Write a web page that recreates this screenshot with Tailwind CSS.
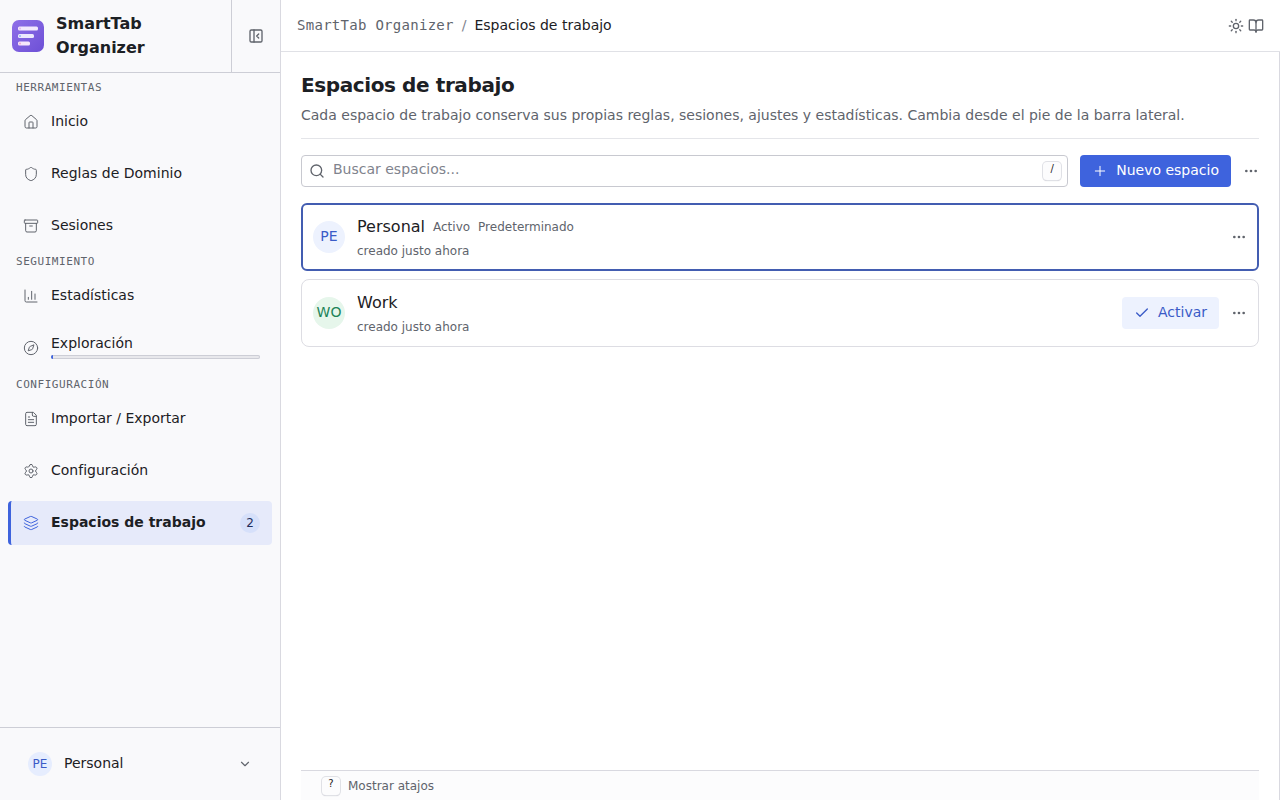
<!DOCTYPE html>
<html lang="es">
<head>
  <meta charset="UTF-8" />
  <meta name="viewport" content="width=device-width, initial-scale=1.0"/>
  <title>SmartTab Organizer - Espacios de trabajo</title>
  <script src="https://cdn.jsdelivr.net/npm/@tailwindcss/browser@4"></script>
</head>
<body class="flex h-screen overflow-hidden bg-white text-sm text-[#1c2024] font-['DejaVu_Sans',sans-serif]">

  <!-- Icons -->
  <svg class="hidden" xmlns="http://www.w3.org/2000/svg">
    <symbol id="i-dots" viewBox="0 0 24 24"><circle cx="12" cy="12" r="1"/><circle cx="19" cy="12" r="1"/><circle cx="5" cy="12" r="1"/></symbol>
    <symbol id="i-home" viewBox="0 0 24 24"><path d="M15 21v-8a1 1 0 0 0-1-1h-4a1 1 0 0 0-1 1v8"/><path d="M3 10a2 2 0 0 1 .709-1.528l7-5.999a2 2 0 0 1 2.582 0l7 5.999A2 2 0 0 1 21 10v9a2 2 0 0 1-2 2H5a2 2 0 0 1-2-2z"/></symbol>
    <symbol id="i-shield" viewBox="0 0 24 24"><path d="M20 13c0 5-3.5 7.5-7.66 8.95a1 1 0 0 1-.67-.01C7.5 20.5 4 18 4 13V6a1 1 0 0 1 1-1c2 0 4.5-1.2 6.24-2.72a1.17 1.17 0 0 1 1.52 0C14.51 3.81 17 5 19 5a1 1 0 0 1 1 1z"/></symbol>
    <symbol id="i-archive" viewBox="0 0 24 24"><rect width="20" height="5" x="2" y="3" rx="1"/><path d="M4 8v11a2 2 0 0 0 2 2h12a2 2 0 0 0 2-2V8"/><path d="M10 12h4"/></symbol>
    <symbol id="i-chart" viewBox="0 0 24 24"><path d="M3 3v16a2 2 0 0 0 2 2h16"/><path d="M18 17V9"/><path d="M13 17V5"/><path d="M8 17v-3"/></symbol>
    <symbol id="i-compass" viewBox="0 0 24 24"><path d="m16.24 7.76-1.804 5.411a2 2 0 0 1-1.265 1.265L7.76 16.24l1.804-5.411a2 2 0 0 1 1.265-1.265z"/><circle cx="12" cy="12" r="10"/></symbol>
    <symbol id="i-file" viewBox="0 0 24 24"><path d="M15 2H6a2 2 0 0 0-2 2v16a2 2 0 0 0 2 2h12a2 2 0 0 0 2-2V7Z"/><path d="M14 2v4a2 2 0 0 0 2 2h4"/><path d="M10 9H8"/><path d="M16 13H8"/><path d="M16 17H8"/></symbol>
    <symbol id="i-gear" viewBox="0 0 24 24"><path d="M9.671 4.136a2.34 2.34 0 0 1 4.659 0 2.34 2.34 0 0 0 3.319 1.915 2.34 2.34 0 0 1 2.33 4.033 2.34 2.34 0 0 0 0 3.831 2.34 2.34 0 0 1-2.33 4.033 2.34 2.34 0 0 0-3.319 1.915 2.34 2.34 0 0 1-4.659 0 2.34 2.34 0 0 0-3.32-1.915 2.34 2.34 0 0 1-2.33-4.033 2.34 2.34 0 0 0 0-3.831A2.34 2.34 0 0 1 6.35 6.051a2.34 2.34 0 0 0 3.319-1.915"/><circle cx="12" cy="12" r="3"/></symbol>
    <symbol id="i-layers" viewBox="0 0 24 24"><path d="M12.83 2.18a2 2 0 0 0-1.66 0L2.6 6.08a1 1 0 0 0 0 1.83l8.58 3.91a2 2 0 0 0 1.66 0l8.58-3.9a1 1 0 0 0 0-1.83z"/><path d="M2 12a1 1 0 0 0 .58.91l8.6 3.91a2 2 0 0 0 1.65 0l8.58-3.9A1 1 0 0 0 22 12"/><path d="M2 17a1 1 0 0 0 .58.91l8.6 3.91a2 2 0 0 0 1.65 0l8.58-3.9A1 1 0 0 0 22 17"/></symbol>
  </svg>

  <!-- Sidebar -->
  <aside class="flex w-[281px] shrink-0 flex-col border-r border-[#d9d9e0] bg-[#f9f9fb]">
    <div class="flex border-b border-[#cdced6]">
      <div class="flex flex-1 items-center gap-3 px-3 py-3">
        <svg class="size-8 shrink-0" viewBox="0 0 32 32">
          <defs>
            <linearGradient id="logo" x1="0" y1="0" x2="1" y2="1">
              <stop offset="0" stop-color="#8f6fe8"/>
              <stop offset="1" stop-color="#6d50d6"/>
            </linearGradient>
          </defs>
          <rect width="32" height="32" rx="7" fill="url(#logo)"/>
          <rect x="6" y="6.5" width="20" height="4" rx="1.5" fill="#f3e8fd"/>
          <rect x="6" y="14" width="16" height="4" rx="1.5" fill="#ece8fd"/>
          <rect x="6" y="21.5" width="12" height="4" rx="1.5" fill="#f5e6fb"/>
          <circle cx="8" cy="8.5" r="1" fill="#e3b8ee"/>
          <circle cx="8" cy="16" r="1" fill="#8fb8f5"/>
          <circle cx="8" cy="23.5" r="1" fill="#f0a8cf"/>
        </svg>
        <span class="text-base leading-6 font-bold">SmartTab Organizer</span>
      </div>
      <button type="button" aria-label="Contraer barra lateral" class="flex w-[49px] items-center justify-center border-l border-[#cdced6] text-[#60646c]">
        <svg class="size-4" viewBox="0 0 24 24" fill="none" stroke="currentColor" stroke-width="2" stroke-linecap="round" stroke-linejoin="round"><rect width="18" height="18" x="3" y="3" rx="2"/><path d="M9 3v18"/><path d="m16 15-3-3 3-3"/></svg>
      </button>
    </div>

    <nav class="flex flex-1 flex-col px-2 pt-px">
      <h2 class="h-[26px] px-2 font-['DejaVu_Sans_Mono',monospace] text-[11px] leading-7 tracking-wider text-[#60646c]">HERRAMIENTAS</h2>
      <div class="flex flex-col gap-2">
        <a href="#" class="flex h-11 items-center gap-3 pr-3 pl-[15px]">
          <svg class="size-4 fill-none stroke-[#60646c] stroke-[1.5] [stroke-linecap:round] [stroke-linejoin:round]"><use href="#i-home"/></svg>
          <span class="pb-0.5">Inicio</span>
        </a>
        <a href="#" class="flex h-11 items-center gap-3 pr-3 pl-[15px]">
          <svg class="size-4 fill-none stroke-[#60646c] stroke-[1.5] [stroke-linecap:round] [stroke-linejoin:round]"><use href="#i-shield"/></svg>
          <span class="pb-0.5">Reglas de Dominio</span>
        </a>
        <a href="#" class="flex h-11 items-center gap-3 pr-3 pl-[15px]">
          <svg class="size-4 fill-none stroke-[#60646c] stroke-[1.5] [stroke-linecap:round] [stroke-linejoin:round]"><use href="#i-archive"/></svg>
          <span class="pb-0.5">Sesiones</span>
        </a>
      </div>

      <h2 class="h-[26px] px-2 font-['DejaVu_Sans_Mono',monospace] text-[11px] leading-7 tracking-wider text-[#60646c]">SEGUIMIENTO</h2>
      <div class="flex flex-col gap-2 pb-px">
        <a href="#" class="flex h-11 items-center gap-3 pr-3 pl-[15px]">
          <svg class="size-4 fill-none stroke-[#60646c] stroke-[1.5] [stroke-linecap:round] [stroke-linejoin:round]"><use href="#i-chart"/></svg>
          <span class="pb-0.5">Estadísticas</span>
        </a>
        <a href="#" class="flex h-11 items-center gap-3 pr-3 pl-[15px]">
          <svg class="size-4 fill-none stroke-[#60646c] stroke-[1.5] [stroke-linecap:round] [stroke-linejoin:round]"><use href="#i-compass"/></svg>
          <span class="flex flex-1 flex-col gap-0.5 pb-1">
            <span class="leading-5">Exploración</span>
            <span class="block h-1 overflow-hidden rounded-full bg-[#e8e8ec] ring-1 ring-[#cdced6] ring-inset">
              <span class="block h-full bg-[#3e63dd]" style="width: 1%"></span>
            </span>
          </span>
        </a>
      </div>

      <h2 class="h-[26px] px-2 font-['DejaVu_Sans_Mono',monospace] text-[11px] leading-7 tracking-wider text-[#60646c]">CONFIGURACIÓN</h2>
      <div class="flex flex-col gap-2">
        <a href="#" class="flex h-11 items-center gap-3 pr-3 pl-[15px]">
          <svg class="size-4 fill-none stroke-[#60646c] stroke-[1.5] [stroke-linecap:round] [stroke-linejoin:round]"><use href="#i-file"/></svg>
          <span class="pb-0.5">Importar / Exportar</span>
        </a>
        <a href="#" class="flex h-11 items-center gap-3 pr-3 pl-[15px]">
          <svg class="size-4 fill-none stroke-[#60646c] stroke-[1.5] [stroke-linecap:round] [stroke-linejoin:round]"><use href="#i-gear"/></svg>
          <span class="pb-0.5">Configuración</span>
        </a>
        <a href="#" aria-current="page" class="flex h-11 items-center gap-3 rounded border-l-3 border-[#3e63dd] bg-[#e6eafa] pr-3 pl-3">
          <svg class="size-4 fill-none stroke-[#3e63dd] stroke-[1.5] [stroke-linecap:round] [stroke-linejoin:round]"><use href="#i-layers"/></svg>
          <span class="flex-1 pb-0.5 font-bold">Espacios de trabajo</span>
          <span class="flex size-5 items-center justify-center rounded-full bg-[#d6e0fa] text-xs text-[#1f2d5c]">2</span>
        </a>
      </div>
    </nav>

    <div class="border-t border-[#cdced6] px-4 py-4">
      <button type="button" class="flex h-10 w-full items-center gap-3 px-3 text-left">
        <span class="flex size-6 items-center justify-center rounded-full bg-[#e6edfe] text-xs text-[#3a5bc7]">PE</span>
        <span class="flex-1 pb-0.5">Personal</span>
        <svg class="size-3.5 text-[#60646c]" viewBox="0 0 24 24" fill="none" stroke="currentColor" stroke-width="2" stroke-linecap="round" stroke-linejoin="round"><path d="m6 9 6 6 6-6"/></svg>
      </button>
    </div>
  </aside>

  <!-- Main column -->
  <div class="flex min-w-0 flex-1 flex-col">
    <header class="flex h-[52px] shrink-0 items-center justify-between border-b border-[#e0e1e6] px-4">
      <nav aria-label="Ruta" class="flex items-center gap-2 pb-0.5">
        <span class="font-['DejaVu_Sans_Mono',monospace] tracking-[0.02em] text-[#60646c]">SmartTab Organizer</span>
        <span class="text-[#80838d]">/</span>
        <span>Espacios de trabajo</span>
      </nav>
      <div class="flex items-center gap-1 text-[#60646c]">
        <button type="button" aria-label="Tema">
          <svg class="size-4" viewBox="0 0 24 24" fill="none" stroke="currentColor" stroke-width="2" stroke-linecap="round" stroke-linejoin="round"><circle cx="12" cy="12" r="4"/><path d="M12 2v2"/><path d="M12 20v2"/><path d="m4.93 4.93 1.41 1.41"/><path d="m17.66 17.66 1.41 1.41"/><path d="M2 12h2"/><path d="M20 12h2"/><path d="m6.34 17.66-1.41 1.41"/><path d="m19.07 4.93-1.41 1.41"/></svg>
        </button>
        <a href="#" aria-label="Documentación">
          <svg class="size-4" viewBox="0 0 24 24" fill="none" stroke="currentColor" stroke-width="2" stroke-linecap="round" stroke-linejoin="round"><path d="M12 7v14"/><path d="M3 18a1 1 0 0 1-1-1V4a1 1 0 0 1 1-1h5a4 4 0 0 1 4 4 4 4 0 0 1 4-4h5a1 1 0 0 1 1 1v13a1 1 0 0 1-1 1h-6a3 3 0 0 0-3 3 3 3 0 0 0-3-3z"/></svg>
        </a>
      </div>
    </header>

    <main class="flex min-h-0 flex-1 flex-col border-r border-[#d9d9e0] px-5 pt-[19px]">
      <div class="border-b border-[#e4e5e9] pb-[13px]">
        <h1 class="text-xl leading-7 font-bold tracking-[-0.02em]">Espacios de trabajo</h1>
        <p class="pt-1.5 leading-5 text-[#60646c]">Cada espacio de trabajo conserva sus propias reglas, sesiones, ajustes y estadísticas. Cambia desde el pie de la barra lateral.</p>
      </div>

      <div class="flex items-center gap-3 pt-4">
        <div class="flex h-8 flex-1 items-center gap-2 rounded border border-[#c8c9d0] pr-1.5 pl-[7px]">
          <svg class="size-4 text-[#60646c]" viewBox="0 0 24 24" fill="none" stroke="currentColor" stroke-width="2" stroke-linecap="round" stroke-linejoin="round"><circle cx="11" cy="11" r="8"/><path d="m21 21-4.3-4.3"/></svg>
          <input type="text" aria-label="Buscar espacios" placeholder="Buscar espacios..." class="min-w-0 flex-1 pb-1 outline-none placeholder:text-[#80838d]" />
          <kbd class="flex size-[18px] items-center justify-center rounded bg-[#fcfcfd] pb-1 font-['DejaVu_Sans',sans-serif] text-[10px] shadow-[0_0_0_1px_#e0e1e6,0_1px_1px_#c4c5cc]">/</kbd>
        </div>
        <button type="button" class="flex h-8 items-center gap-2 rounded bg-[#3e63dd] px-3 text-white">
          <svg class="size-4" viewBox="0 0 24 24" fill="none" stroke="currentColor" stroke-width="1.5" stroke-linecap="round" stroke-linejoin="round"><path d="M5 12h14"/><path d="M12 5v14"/></svg>
          <span class="pb-0.5">Nuevo espacio</span>
        </button>
        <button type="button" aria-label="Más acciones" class="text-[#60646c]">
          <svg class="size-4 fill-none stroke-current stroke-2"><use href="#i-dots"/></svg>
        </button>
      </div>

      <ul class="flex flex-1 flex-col gap-2 pt-4">
        <li class="flex h-[68px] items-center gap-3 rounded-md border-2 border-[#435db1] px-[10px]">
          <span class="flex size-8 items-center justify-center rounded-full bg-[#edf2fe] pb-0.5 text-[#3a5bc7]">PE</span>
          <div class="flex-1">
            <div class="flex items-center gap-2 leading-6">
              <span class="text-base">Personal</span>
              <span class="text-xs text-[#60646c]">Activo</span>
              <span class="text-xs text-[#60646c]">Predeterminado</span>
            </div>
            <p class="pt-1 text-xs text-[#60646c]">creado justo ahora</p>
          </div>
          <button type="button" aria-label="Acciones de Personal" class="text-[#60646c]">
            <svg class="size-4 fill-none stroke-current stroke-2"><use href="#i-dots"/></svg>
          </button>
        </li>
        <li class="flex h-[68px] items-center gap-3 rounded-lg border border-[#dddde3] px-[11px]">
          <span class="flex size-8 items-center justify-center rounded-full bg-[#e6f6eb] pb-0.5 text-[#218358]">WO</span>
          <div class="flex-1">
            <div class="flex items-center gap-2 leading-6">
              <span class="text-base">Work</span>
            </div>
            <p class="pt-1 text-xs text-[#60646c]">creado justo ahora</p>
          </div>
          <button type="button" class="flex h-8 items-center gap-2 rounded bg-[#edf2fe] px-3 text-[#3a5bc7]">
            <svg class="size-4" viewBox="0 0 24 24" fill="none" stroke="currentColor" stroke-width="2" stroke-linecap="round" stroke-linejoin="round"><path d="M20 6 9 17l-5-5"/></svg>
            <span class="pb-0.5">Activar</span>
          </button>
          <button type="button" aria-label="Acciones de Work" class="text-[#60646c]">
            <svg class="size-4 fill-none stroke-current stroke-2"><use href="#i-dots"/></svg>
          </button>
        </li>
      </ul>

      <footer class="flex h-[30px] items-center border-t border-[#d9d9e0] bg-[#fcfcfd] px-[21px]">
        <button type="button" class="flex items-center gap-2 text-xs text-[#60646c]">
          <kbd class="flex size-[18px] items-center justify-center rounded bg-[#fcfcfd] pb-1 font-['DejaVu_Sans',sans-serif] text-[10px] text-[#1c2024] shadow-[0_0_0_1px_#e0e1e6,0_1px_1px_#c4c5cc]">?</kbd>
          <span>Mostrar atajos</span>
        </button>
      </footer>
    </main>
  </div>
</body>
</html>
